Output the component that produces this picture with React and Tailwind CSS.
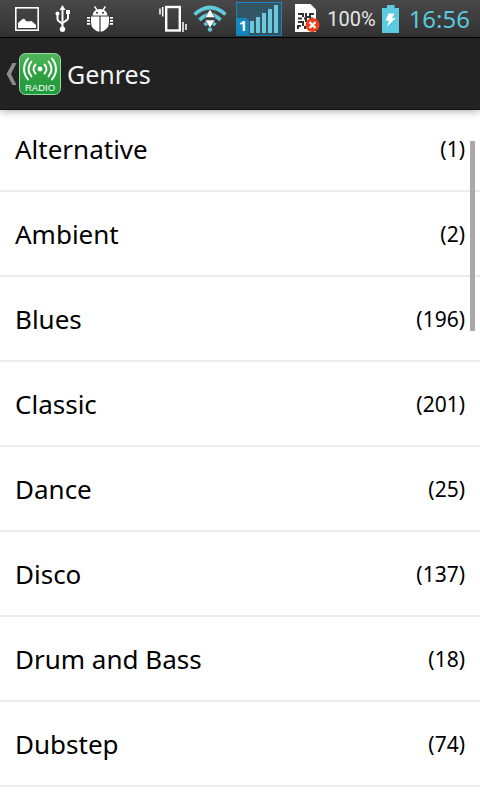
const FONT = "font-['Noto_Sans','Open_Sans',sans-serif]";

const genres = [
  ["Alternative", 1],
  ["Ambient", 2],
  ["Blues", 196],
  ["Classic", 201],
  ["Dance", 25],
  ["Disco", 137],
  ["Drum and Bass", 18],
  ["Dubstep", 74],
];

function PictureIcon() {
  return (
    <svg className="h-6 w-6" viewBox="0 0 24 24" aria-hidden="true">
      <rect x="0.8" y="0.8" width="22.4" height="22.4" fill="none" stroke="#fff" strokeWidth="1.6" />
      <path d="M3 21v-5l4-3.500 2-1 2 2.500 2 .5 3.500-.5L21 18v3z" fill="#fff" />
    </svg>
  );
}

function UsbIcon() {
  return (
    <svg className="h-7 w-4" viewBox="0 0 16 28" aria-hidden="true">
      <g fill="none" stroke="#fff" strokeWidth="2">
        <path d="M7.500 4v20" />
        <path d="M2.500 10v4q0 1.500 1.500 2.300l3.500 2.700" />
        <path d="M13 8v5q0 1.500-1.500 2.300L7.500 18" />
      </g>
      <path d="M7.500 0l3 5h-6z" fill="#fff" />
      <circle cx="2.500" cy="8.500" r="2" fill="#fff" />
      <rect x="11" y="5" width="4" height="4" fill="#fff" />
      <circle cx="7.500" cy="24.300" r="2.700" fill="#fff" />
    </svg>
  );
}

function DebugIcon() {
  return (
    <svg className="h-[26px] w-[26px]" viewBox="0 0 26 26" aria-hidden="true">
      <g fill="#fff">
        <path d="M5.500 9.500Q6 5.500 9 4L7 .8l1.200-.8 2.200 3.400q2.600-.8 5.200 0L17.800 0l1.200.8L17 4q3 1.500 3.500 5.500z" />
        <path d="M4 10.500h8.400v15.300Q4 24 4 16zM13.600 10.500H22V16q0 8-8.400 9.800z" />
        <path d="M0 11h3v1.700H0zM0 14h3v1.700H0zM0 17h3.200v1.700H0zM23 11h3v1.700h-3zM23 14h3v1.700h-3zM22.800 17H26v1.700h-3.200z" />
      </g>
      <circle cx="10" cy="6.800" r="1" fill="#3b3b3b" />
      <circle cx="16" cy="6.800" r="1" fill="#3b3b3b" />
    </svg>
  );
}

function VibrateIcon() {
  return (
    <svg className="h-7 w-7" viewBox="0 0 28 28" aria-hidden="true">
      <rect x="7.200" y="2" width="13.600" height="23.500" fill="none" stroke="#fff" strokeWidth="2.400" />
      <path d="M1 3.500v6M3.700 2v9.500M24 17v10M27 19v6" stroke="#fff" strokeWidth="1.500" fill="none" />
    </svg>
  );
}

function WifiIcon() {
  return (
    <svg className="h-[27px] w-[34px]" viewBox="0 0 34 27" aria-hidden="true">
      <g fill="none" stroke="#61c9dc" strokeWidth="3.600">
        <path d="M1.500 9.500Q17-4.500 32.500 9.500" />
        <path d="M6.500 15Q17 4.500 27.500 15" />
        <path d="M11.500 20Q17 14.500 22.500 20" />
      </g>
      <circle cx="17" cy="24.500" r="2.200" fill="#61c9dc" />
      <path d="M17 4l5 8.500H12zM12 15h10l-5 8z" fill="#fff" stroke="#3b4a4e" strokeWidth="0.600" />
    </svg>
  );
}

function SignalIcon() {
  return (
    <svg className="h-[34px] w-[46px]" viewBox="0 0 46 34" aria-hidden="true">
      <rect x="0.500" y="0.500" width="45" height="33" fill="#345563" stroke="#1787c4" />
      <g fill="#6cc8dc">
        <rect x="14" y="19" width="4" height="12" />
        <rect x="20" y="15" width="4" height="16" />
        <rect x="26" y="11" width="4" height="20" />
        <rect x="32" y="7" width="4" height="24" />
        <rect x="38" y="3" width="4" height="28" />
      </g>
      <path d="M0 16h10l3 3v15H0z" fill="#1787c4" />
      <text x="7" y="29" textAnchor="middle" fontSize="14" fontWeight="700" fill="#fff">1</text>
    </svg>
  );
}

function SimIcon() {
  return (
    <svg className="h-[29px] w-[25px]" viewBox="0 0 25 29" aria-hidden="true">
      <path d="M0 0h15.500L21 5.500V28H0z" fill="#fff" />
      <path d="M3 10h5v3M11 9v4h4v-3h4M3 14.500h4M9 14.500h3M3 18h5v4M11 13v5M3 25v-3h3M10 25v-3M14.500 14.500H18" fill="none" stroke="#333" strokeWidth="2" />
      <circle cx="17.500" cy="21" r="7" fill="#ee3d17" />
      <path d="M14.500 18l6 6M20.500 18l-6 6" stroke="#fff" strokeWidth="2.200" />
    </svg>
  );
}

function BatteryIcon() {
  return (
    <svg className="h-7 w-[17px]" viewBox="0 0 17 28" aria-hidden="true">
      <path d="M5 0h7.500v3H17v25H0V3h5z" fill="#5ccbe2" />
      <path d="M6.500 8.500h6L10 13h3.500L5 22l2-6.500H3.500z" fill="#fff" />
    </svg>
  );
}

function RadioLogo() {
  return (
    <svg className="h-[42px] w-[42px]" viewBox="0 0 42 42" aria-hidden="true">
      <defs>
        <linearGradient id="logo" x1="0" y1="0" x2="0" y2="1">
          <stop offset="0" stopColor="#4fb55a" />
          <stop offset="0.500" stopColor="#2fa143" />
          <stop offset="1" stopColor="#1f9a3c" />
        </linearGradient>
      </defs>
      <rect x="0.500" y="0.500" width="41" height="41" rx="6" fill="url(#logo)" stroke="#9bd8a0" />
      <circle cx="21" cy="16" r="2.400" fill="#fff" />
      <g fill="none" stroke="#fff" strokeWidth="1.900" strokeLinecap="round">
        <path d="M16.500 11.500q-4 4.500 0 9M25.500 11.500q4 4.500 0 9" />
        <path d="M12.500 8.500q-6 7.500 0 15M29.500 8.500q6 7.500 0 15" />
        <path d="M9 5.500q-8 10.500 0 21M33 5.500q8 10.500 0 21" />
      </g>
      <text x="21" y="38" textAnchor="middle" fontSize="9.500" fill="#fff" className="font-['Liberation_Sans',sans-serif]">RADIO</text>
    </svg>
  );
}

function StatusBar() {
  return (
    <div className="flex h-[38px] items-center justify-between border-b border-black bg-linear-to-b from-[#484848] to-[#333333] pr-[10px] pl-[15px]">
      <div className="flex items-center gap-4">
        <PictureIcon />
        <UsbIcon />
        <DebugIcon />
      </div>
      <div className="flex items-center">
        <VibrateIcon />
        <span className="ml-[6px]"><WifiIcon /></span>
        <span className="ml-[9px]"><SignalIcon /></span>
        <span className="ml-[13px]"><SimIcon /></span>
        <span className="ml-[7px] pt-px font-['Roboto',sans-serif] text-[20px] text-[#e6e6e6]">100%</span>
        <span className="ml-[6px]"><BatteryIcon /></span>
        <span className="ml-[10px] pt-px text-[24px] text-[#5ac8de]">16:56</span>
      </div>
    </div>
  );
}

export default function App() {
  return (
    <div className={`${FONT} min-h-screen bg-white text-black`}>
      <StatusBar />
      <header className="relative z-10 flex h-[72px] items-center border-b border-[#111] bg-[#222222] pl-[6px] shadow-[0_1px_8px_rgba(0,0,0,0.35)]">
        <button type="button" aria-label="Back" className="flex items-center gap-[2px]">
          <svg className="h-[22px] w-[11px]" viewBox="0 0 11 22" aria-hidden="true">
            <path d="M6.500 0H10.500L5 11l5.500 11h-4L0.500 11z" fill="#8c8c8c" />
          </svg>
          <RadioLogo />
        </button>
        <h1 className="ml-[6px] pt-[2px] text-[25px] text-[#f4f4f4]">Genres</h1>
      </header>
      <main className="relative -mt-[3px]">
        <ul>
          {genres.map(([name, count]) => (
            <li key={name} className="border-b-2 border-[#ebebeb]">
              <button type="button" className="flex h-[83px] w-full items-center justify-between px-[15px] pt-[2px] text-left">
                <span className="text-[26px]">{name}</span>
                <span className="pt-px text-[21px]">({count})</span>
              </button>
            </li>
          ))}
        </ul>
        <div className="absolute top-[34px] right-[5px] h-[190px] w-[5px] bg-[#a9a9a9]" />
      </main>
    </div>
  );
}
